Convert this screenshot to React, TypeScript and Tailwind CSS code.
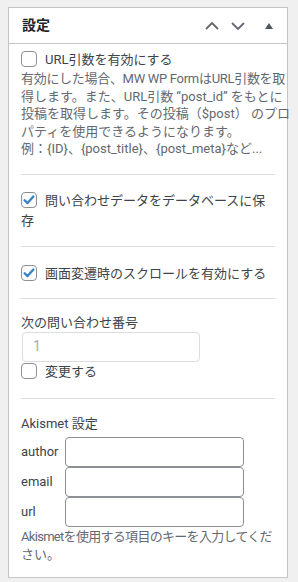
const font = "font-['Roboto','Noto_Sans_CJK_JP',sans-serif]";

function Checkbox({ checked = false }: { checked?: boolean }) {
  return (
    <span className="relative mr-[8px] inline-block h-[16px] w-[16px] shrink-0 rounded-[4px] border border-[#8c8f94] bg-white align-[-3px]">
      {checked && (
        <svg viewBox="0 0 16 16" className="absolute left-[-1px] top-[-1px] h-[16px] w-[16px]">
          <path d="M3.6 8.2l2.9 2.9 5.9-6.6" fill="none" stroke="#3582c4" strokeWidth="2.3" strokeLinecap="round" strokeLinejoin="round" />
        </svg>
      )}
    </span>
  );
}

function Header() {
  return (
    <div className="flex h-[36px] items-center justify-between border-b border-[#c3c4c7]">
      <h2 className="pl-[13px] text-[14px] font-semibold text-[#1d2327]">設定</h2>
      <div className="flex h-full items-center">
        <span className="flex w-[26px] justify-center">
          <svg width="14" height="8" viewBox="0 0 14 8">
            <path d="M1 7l6-6 6 6" fill="none" stroke="#646970" strokeWidth="1.8" />
          </svg>
        </span>
        <span className="flex w-[26px] justify-center">
          <svg width="14" height="8" viewBox="0 0 14 8">
            <path d="M1 1l6 6 6-6" fill="none" stroke="#646970" strokeWidth="1.8" />
          </svg>
        </span>
        <span className="flex w-[36px] justify-center">
          <svg width="8" height="6" viewBox="0 0 8 6">
            <path d="M4 0L8 6H0z" fill="#50575e" />
          </svg>
        </span>
      </div>
    </div>
  );
}

function Sep() {
  return <div className="h-px bg-[#dcdcde]" />;
}

export default function App() {
  return (
    <div className={`h-[582px] w-[298px] bg-[#f0f0f1] px-[8px] pt-[7px] ${font}`}>
      <div className="w-[280px] border border-[#c3c4c7] bg-white">
        <Header />
        <div className="px-[12px] text-[13px] text-[#3c434a]">
          <div className="pb-[16px] pt-[6px]">
            <label className="block leading-[20px]">
              <Checkbox />
              URL引数を有効にする
            </label>
            <p className="whitespace-nowrap leading-[17.5px] text-[#646970]">
              <span className="tracking-[-0.3px]">有効にした場合、MW WP FormはURL引数を取</span>
              <br />
              得します。また、URL引数 “post_id” をもとに
              <br />
              投稿を取得します。その投稿（$post） のプロ
              <br />
              パティを使用できるようになります。
              <br />
              例：{"{ID}"}、{"{post_title}"}、{"{post_meta}"}など...
            </p>
          </div>
          <Sep />
          <div className="pb-[15px] pt-[16px]">
            <label className="block leading-[20px]">
              <Checkbox checked />
              問い合わせデータをデータベースに保存
            </label>
          </div>
          <Sep />
          <div className="pb-[14px] pt-[17px]">
            <label className="block leading-[20px]">
              <Checkbox checked />
              画面変遷時のスクロールを有効にする
            </label>
          </div>
          <Sep />
          <div className="pb-[16px] pt-[15px]">
            <p className="leading-[18px]">次の問い合わせ番号</p>
            <div className="ml-px flex h-[30px] w-[178px] items-center rounded-[4px] border border-[#dcdcde] px-[10px] text-[14px] text-[#a7aaad]">
              1
            </div>
            <label className="block leading-[20px]">
              <Checkbox />
              変更する
            </label>
          </div>
          <Sep />
          <div className="pb-[13px] pt-[16px]">
            <p className="leading-[18px]">Akismet 設定</p>
            <div className="mt-[4px] grid grid-cols-[44px_179px] items-center">
              <span>author</span>
              <div className="h-[30px] rounded-[4px] border border-[#8c8f94] bg-white" />
              <span>email</span>
              <div className="h-[30px] rounded-[4px] border border-[#8c8f94] bg-white" />
              <span>url</span>
              <div className="h-[30px] rounded-[4px] border border-[#8c8f94] bg-white" />
            </div>
            <p className="mt-px whitespace-nowrap leading-[18px] text-[#646970]">
              <span className="tracking-[-0.7px]">Akismetを使用する項目のキーを入力してくだ</span>
              <br />
              さい。
            </p>
          </div>
        </div>
      </div>
    </div>
  );
}
